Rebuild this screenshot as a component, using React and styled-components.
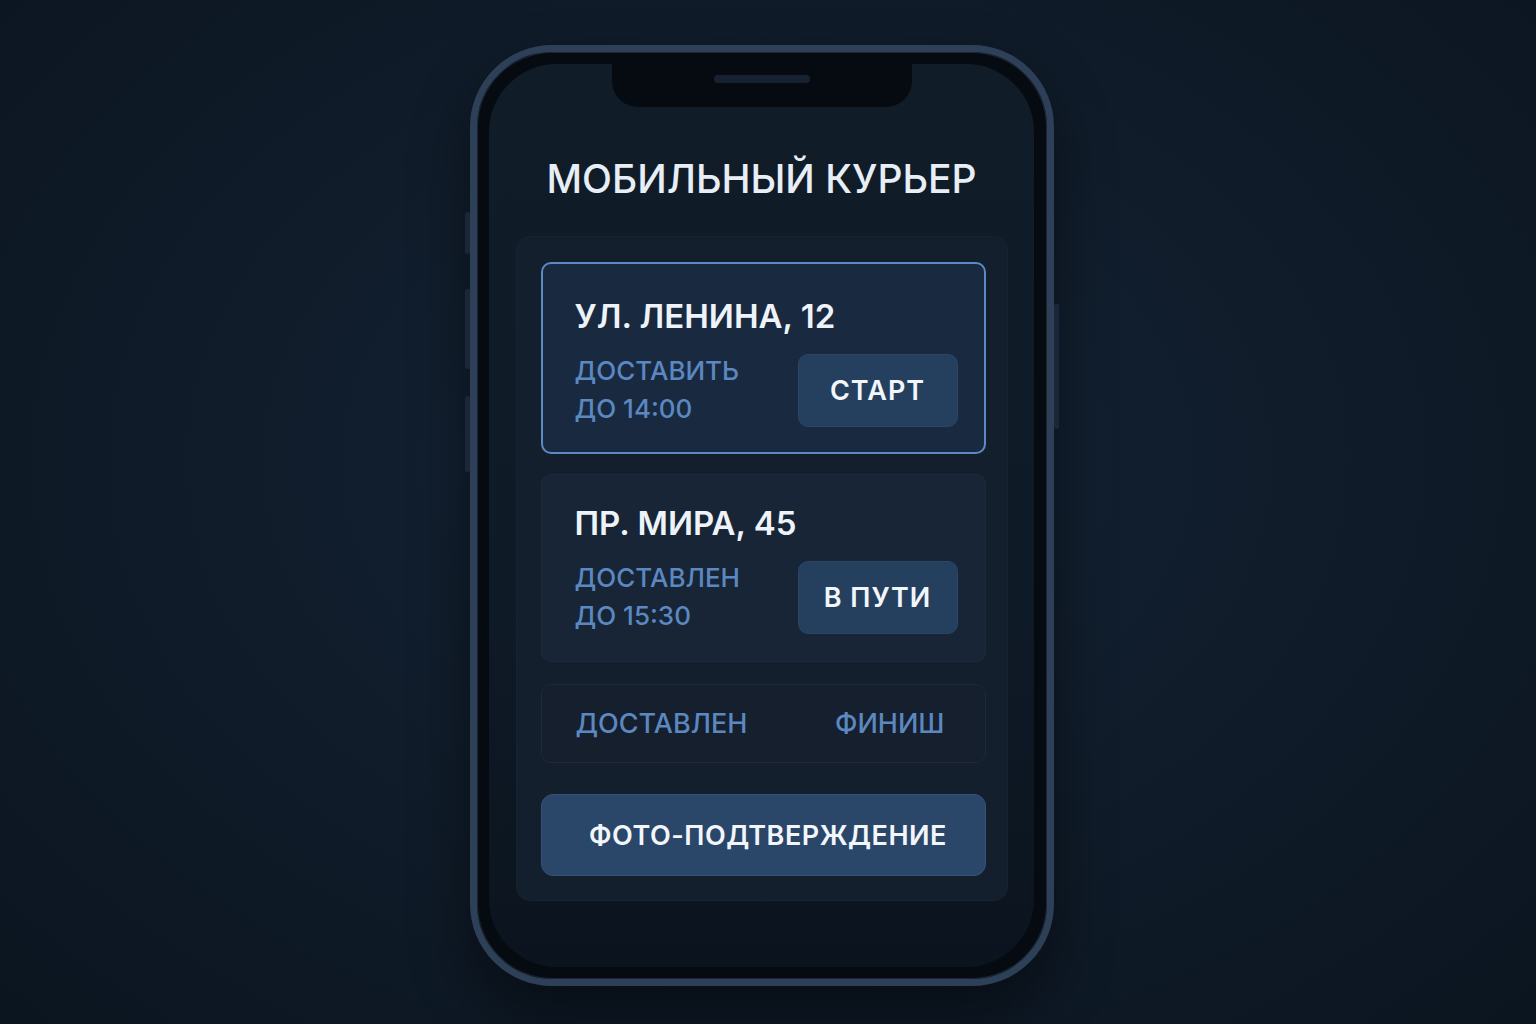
import styled, { createGlobalStyle } from "styled-components";

const Global = createGlobalStyle`
  html, body {
    margin: 0;
    padding: 0;
    background: #0e1925;
  }
  * { box-sizing: border-box; }
`;

const deliveries = [
  { id: 1, address: "УЛ. ЛЕНИНА, 12", status: "ДОСТАВИТЬ", time: "ДО 14:00", action: "СТАРТ", active: true },
  { id: 2, address: "ПР. МИРА, 45", status: "ДОСТАВЛЕН", time: "ДО 15:30", action: "В ПУТИ" },
];

const App = () => {
  return (
    <>
      <Global />
      <Page>
        <Phone>
          <SideKey $side="left" $top={160} $h={42} />
          <SideKey $side="left" $top={237} $h={80} />
          <SideKey $side="left" $top={344} $h={76} />
          <SideKey $side="right" $top={252} $h={125} />
          <Screen>
            <Notch><Speaker /></Notch>
            <Title>МОБИЛЬНЫЙ КУРЬЕР</Title>
            <Panel>
              {deliveries.map((d) => (
                <Card key={d.id} $active={d.active}>
                  <Address>{d.address}</Address>
                  <CardRow>
                    <Status>
                      {d.status}
                      <br />
                      {d.time}
                    </Status>
                    <ActionButton>{d.action}</ActionButton>
                  </CardRow>
                </Card>
              ))}
              <DoneRow>
                <DoneLabel>ДОСТАВЛЕН</DoneLabel>
                <DoneLabel>ФИНИШ</DoneLabel>
              </DoneRow>
              <PhotoButton>ФОТО-ПОДТВЕРЖДЕНИЕ</PhotoButton>
            </Panel>
          </Screen>
        </Phone>
      </Page>
    </>
  );
};

const Page = styled.main`
  width: 1536px;
  height: 1024px;
  display: flex;
  justify-content: center;
  padding-top: 45px;
  padding-right: 12px;
  background: radial-gradient(ellipse at 50% 45%, #142335 0%, #101c2a 50%, #0b1520 100%);
  font-family: Inter, "Noto Sans", sans-serif;
`;

const Phone = styled.div`
  position: relative;
  width: 584px;
  height: 941px;
  border-radius: 82px;
  border: 7px solid #2e4058;
  background: #060b12;
  padding: 12px 13px 12px 12px;
  box-shadow: 0 30px 60px rgba(0, 0, 0, 0.45), inset 0 0 0 1px #1a2636;
`;

const SideKey = styled.span`
  position: absolute;
  top: ${(p) => p.$top}px;
  height: ${(p) => p.$h}px;
  width: 5px;
  ${(p) => (p.$side === "left" ? "left: -12px;" : "right: -12px;")}
  border-radius: 2px;
  background: #1b2738;
`;

const Screen = styled.div`
  position: relative;
  height: 100%;
  border-radius: 68px;
  background: linear-gradient(180deg, #111c29 0%, #0f1a27 60%, #0b141e 100%);
  display: flex;
  flex-direction: column;
  align-items: center;
  padding-top: 93px;
`;

const Notch = styled.div`
  position: absolute;
  top: 0;
  left: 50%;
  transform: translateX(-50%);
  width: 300px;
  height: 43px;
  background: #060b12;
  border-radius: 0 0 26px 26px;
  display: flex;
  justify-content: center;
  padding-top: 11px;
`;

const Speaker = styled.span`
  width: 96px;
  height: 8px;
  border-radius: 4px;
  background: #172231;
`;

const Title = styled.h1`
  margin: 0;
  font-size: 39px;
  line-height: 44px;
  font-weight: 500;
  letter-spacing: 0;
  color: #e8eef6;
`;

const Panel = styled.section`
  margin-top: 35px;
  width: 492px;
  background: #141f2d;
  border: 1px solid #172333;
  border-radius: 14px;
  padding: 25px 21px 24px 24px;
  display: flex;
  flex-direction: column;
`;

const Card = styled.article`
  height: ${(p) => (p.$active ? 192 : 188)}px;
  margin-bottom: ${(p) => (p.$active ? 20 : 22)}px;
  border-radius: 10px;
  border: ${(p) => (p.$active ? "2px solid #5d8ac4" : "1px solid #1c2a3b")};
  background: ${(p) => (p.$active ? "#192a40" : "#172537")};
  padding: ${(p) => (p.$active ? "30px 26px 0 32px" : "26px 27px 0 33px")};
  display: flex;
  flex-direction: column;
`;

const Address = styled.div`
  font-size: 33px;
  line-height: 44px;
  font-weight: 600;
  color: #eef3fa;
`;

const CardRow = styled.div`
  margin-top: 14px;
  display: flex;
  justify-content: space-between;
  align-items: center;
`;

const Status = styled.div`
  font-size: 26px;
  line-height: 38px;
  font-weight: 500;
  color: #5b88c0;
`;

const ActionButton = styled.button`
  width: 160px;
  height: 73px;
  border: 1px solid #2b4565;
  border-radius: 10px;
  background: #25405f;
  color: #f2f6fb;
  font-family: inherit;
  font-size: 27px;
  font-weight: 600;
  letter-spacing: 1px;
`;

const DoneRow = styled.div`
  height: 79px;
  border-radius: 10px;
  border: 1px solid #1c2a3b;
  background: #151f2d;
  display: flex;
  justify-content: space-between;
  align-items: center;
  padding: 0 40px 0 34px;
  margin-bottom: 31px;
`;

const DoneLabel = styled.span`
  font-size: 27px;
  font-weight: 500;
  color: #5b88c0;
`;

const PhotoButton = styled.button`
  height: 82px;
  border: 1px solid #34527a;
  border-radius: 12px;
  background: #2a4669;
  color: #f2f6fb;
  font-family: inherit;
  font-size: 27px;
  font-weight: 600;
  letter-spacing: 0.5px;
  padding: 0 0 0 10px;
`;

export default App;
